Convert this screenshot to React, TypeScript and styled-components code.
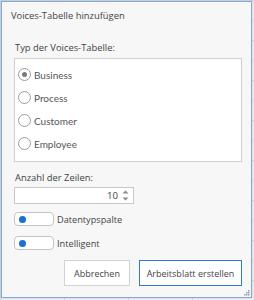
import { FC, useState } from "react";
import styled, { createGlobalStyle } from "styled-components";

const GlobalStyle = createGlobalStyle`
  html, body {
    margin: 0;
    padding: 0;
  }
  body {
    width: 254px;
    height: 300px;
    overflow: hidden;
    background-color: #eef0f2;
    background-image:
      linear-gradient(to right, #d4d8dc 1px, transparent 1px),
      linear-gradient(to bottom, #d4d8dc 1px, transparent 1px);
    background-size: 64px 20px;
    font-family: "Open Sans", "Noto Sans", sans-serif;
    color: #444;
  }
`;

const options = ["Business", "Process", "Customer", "Employee"];

const App: FC = () => {
  const [type, setType] = useState("Business");
  const [rows, setRows] = useState(10);

  return (
    <>
      <GlobalStyle />
      <Dialog>
        <Title>Voices-Tabelle hinzufügen</Title>
        <Content>
          <SectionLabel>Typ der Voices-Tabelle:</SectionLabel>
          <RadioBox>
            {options.map((option) => (
              <RadioRow key={option} onClick={() => setType(option)}>
                <RadioCircle $checked={type === option} />
                <RadioText>{option}</RadioText>
              </RadioRow>
            ))}
          </RadioBox>
          <SectionLabel $top={8}>Anzahl der Zeilen:</SectionLabel>
          <Spin>
            <SpinValue>{rows}</SpinValue>
            <SpinArrows>
              <ArrowButton onClick={() => setRows(rows + 1)}>
                <svg width="7" height="4" viewBox="0 0 7 4">
                  <path d="M0.5 3.5 L3.5 0.5 L6.5 3.5 Z" fill="#8a8a8a" />
                </svg>
              </ArrowButton>
              <ArrowButton onClick={() => setRows(Math.max(0, rows - 1))}>
                <svg width="7" height="4" viewBox="0 0 7 4">
                  <path d="M0.5 0.5 L3.5 3.5 L6.5 0.5 Z" fill="#8a8a8a" />
                </svg>
              </ArrowButton>
            </SpinArrows>
          </Spin>
          <ToggleRow $top={8}>
            <Toggle>
              <ToggleDot />
            </Toggle>
            <ToggleText>Datentypspalte</ToggleText>
          </ToggleRow>
          <ToggleRow $top={10}>
            <Toggle>
              <ToggleDot />
            </Toggle>
            <ToggleText>Intelligent</ToggleText>
          </ToggleRow>
          <Buttons>
            <Button $width={66}>Abbrechen</Button>
            <Button $width={103} $primary>
              Arbeitsblatt erstellen
            </Button>
          </Buttons>
        </Content>
        <Grip width="7" height="7" viewBox="0 0 7 7">
          <rect x="5" y="1" width="1.5" height="1.5" fill="#9aa0a6" />
          <rect x="3" y="3" width="1.5" height="1.5" fill="#9aa0a6" />
          <rect x="5" y="3" width="1.5" height="1.5" fill="#9aa0a6" />
          <rect x="1" y="5" width="1.5" height="1.5" fill="#9aa0a6" />
          <rect x="3" y="5" width="1.5" height="1.5" fill="#9aa0a6" />
          <rect x="5" y="5" width="1.5" height="1.5" fill="#9aa0a6" />
        </Grip>
      </Dialog>
    </>
  );
};

export default App;

const Dialog = styled.div`
  position: relative;
  box-sizing: border-box;
  margin: 1px 0 0 1px;
  width: 251px;
  height: 297px;
  display: flex;
  flex-direction: column;
  background: #f7f7f7;
  border: 1px solid #86a9d6;
  box-shadow: 0 0 2px rgba(80, 120, 170, 0.35);
`;

const Title = styled.div`
  height: 28px;
  line-height: 28px;
  padding-left: 9px;
  font-size: 9.4px;
  color: #444;
`;

const Content = styled.div`
  display: flex;
  flex-direction: column;
  padding: 0 9px 0 12px;
  margin-top: 10px;
`;

const SectionLabel = styled.div<{ $top?: number }>`
  height: 16px;
  line-height: 16px;
  margin-top: ${({ $top = 0 }) => $top}px;
  padding-left: 1px;
  font-size: 9.4px;
`;

const RadioBox = styled.div`
  box-sizing: border-box;
  margin-top: 2px;
  width: 228px;
  height: 104px;
  padding: 4px 0 6px 3px;
  background: #fff;
  border: 1px solid #cfcfcf;
  display: flex;
  flex-direction: column;
`;

const RadioRow = styled.div`
  display: flex;
  align-items: center;
  gap: 3px;
  height: 23.5px;
  cursor: pointer;
`;

const RadioCircle = styled.span<{ $checked: boolean }>`
  box-sizing: border-box;
  width: 13px;
  height: 13px;
  border-radius: 50%;
  border: 1px solid #9c9c9c;
  background: #fff;
  display: flex;
  align-items: center;
  justify-content: center;

  &::after {
    content: "";
    display: ${({ $checked }) => ($checked ? "block" : "none")};
    width: 5px;
    height: 5px;
    border-radius: 50%;
    background: #7a7a7a;
  }
`;

const RadioText = styled.span`
  font-family: Lato, "Open Sans", sans-serif;
  font-size: 10px;
  color: #555;
`;

const Spin = styled.div`
  box-sizing: border-box;
  margin-top: 1px;
  width: 120px;
  height: 17px;
  background: #fff;
  border: 1px solid #c8c8c8;
  display: flex;
  align-items: center;
  justify-content: flex-end;
  padding-right: 3px;
  gap: 3px;
`;

const SpinValue = styled.span`
  font-size: 9.6px;
  line-height: 15px;
  color: #444;
`;

const SpinArrows = styled.div`
  display: flex;
  flex-direction: column;
  gap: 3px;
`;

const ArrowButton = styled.span`
  display: flex;
  width: 9px;
  justify-content: center;
  line-height: 0;
  cursor: pointer;
`;

const ToggleRow = styled.div<{ $top: number }>`
  display: flex;
  align-items: center;
  gap: 3px;
  margin-top: ${({ $top }) => $top}px;
  height: 14px;
`;

const Toggle = styled.span`
  box-sizing: border-box;
  width: 40px;
  height: 14px;
  border: 1px solid #c4c4c4;
  border-radius: 4px;
  background: #fff;
  display: flex;
  align-items: center;
  padding-left: 4px;
`;

const ToggleDot = styled.span`
  width: 7px;
  height: 7px;
  border-radius: 50%;
  background: #1b6fd1;
`;

const ToggleText = styled.span`
  font-size: 9.2px;
  color: #444;
`;

const Buttons = styled.div`
  display: flex;
  justify-content: flex-end;
  gap: 9px;
  margin-top: 10px;
`;

const Button = styled.button<{ $primary?: boolean; $width: number }>`
  box-sizing: border-box;
  flex: none;
  width: ${({ $width }) => $width}px;
  height: 26px;
  padding: 0;
  white-space: nowrap;
  font-family: "Open Sans", "Noto Sans", sans-serif;
  font-size: 9px;
  color: #444;
  background: #fff;
  border: 1px solid ${({ $primary }) => ($primary ? "#2f7bd1" : "#d2d2d2")};
  border-radius: 0;
  cursor: pointer;
`;

const Grip = styled.svg`
  position: absolute;
  right: 1px;
  bottom: 1px;
`;
